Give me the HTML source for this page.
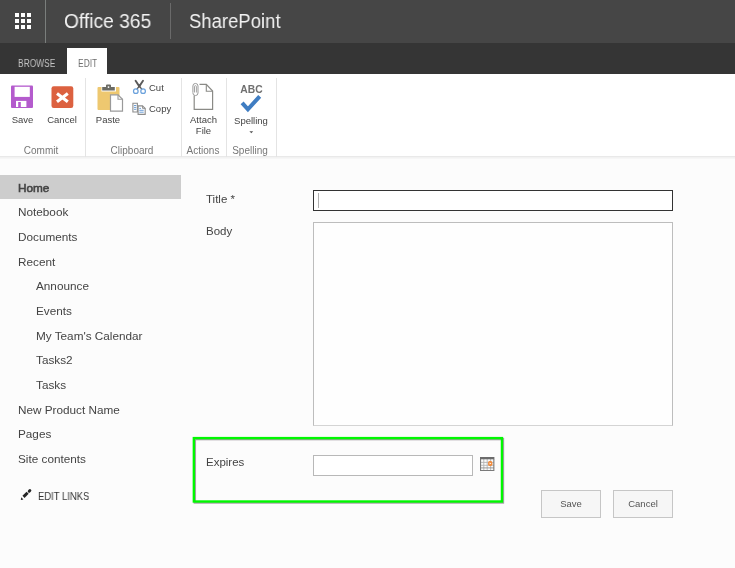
<!DOCTYPE html>
<html><head><meta charset="utf-8">
<style>
*{margin:0;padding:0;box-sizing:border-box}
html,body{width:735px;height:568px;overflow:hidden;-webkit-font-smoothing:antialiased;background:#fcfcfc;font-family:"Liberation Sans",sans-serif;color:#444}
.abs{position:absolute}
#top{position:absolute;left:0;top:0;width:735px;height:43px;background:#464646}
#tabs{position:absolute;left:0;top:43px;width:735px;height:31px;background:#353535}
#ribbon{position:absolute;left:0;top:74px;width:735px;height:83px;background:#ffffff;border-bottom:1px solid #e9e9e9}
#rshadow{position:absolute;left:0;top:157px;width:735px;height:2px;background:linear-gradient(#f0f0f0,#f8f8f8)}
.sq{position:absolute;width:4px;height:4px;background:#fff}
.vdiv{position:absolute;width:1px;background:#7a7a7a}
.ttl{position:absolute;top:9px;font-size:20px;color:#f2f2f2;line-height:24px;white-space:nowrap;transform-origin:0 0}
.tab{position:absolute;font-size:10px;line-height:12px;white-space:nowrap}
.rl{position:absolute;font-size:9.5px;color:#444;line-height:12px;white-space:nowrap;text-align:center}
.gl{position:absolute;font-size:10px;color:#777;line-height:12px;white-space:nowrap;text-align:center;width:100px}
.gsep{position:absolute;top:4px;width:1px;height:79px;background:#e4e4e4}
.nav{position:absolute;left:18px;font-size:11.75px;color:#444;line-height:16px;white-space:nowrap}
.nav.sub{left:36px}
.lbl{position:absolute;left:206px;font-size:11.5px;color:#444;line-height:16px;white-space:nowrap}
.btn{position:absolute;top:490px;height:28px;border:1px solid #c6c6c6;background:#f6f6f6;font-size:9.5px;color:#555;text-align:center;line-height:26px}
div,svg{will-change:transform}</style></head><body>
<div id="top">
  <div class="sq" style="left:15px;top:13px"></div><div class="sq" style="left:21px;top:13px"></div><div class="sq" style="left:27px;top:13px"></div>
  <div class="sq" style="left:15px;top:19px"></div><div class="sq" style="left:21px;top:19px"></div><div class="sq" style="left:27px;top:19px"></div>
  <div class="sq" style="left:15px;top:25px"></div><div class="sq" style="left:21px;top:25px"></div><div class="sq" style="left:27px;top:25px"></div>
  <div class="vdiv" style="left:45px;top:0;height:43px;background:#7a7e7c"></div>
  <div class="ttl" style="left:64px;transform:scaleX(0.96)">Office 365</div>
  <div class="vdiv" style="left:170px;top:3px;height:36px;background:#6a6a6a"></div>
  <div class="ttl" style="left:189px;transform:scaleX(0.925)">SharePoint</div>
</div>
<div id="tabs">
  <div class="tab" style="left:18px;top:15px;color:#c4c4c4;transform:scaleX(0.84);transform-origin:0 0">BROWSE</div>
  <div class="abs" style="left:67px;top:5px;width:40px;height:26px;background:#fff"></div>
  <div class="tab" style="left:78px;top:15px;color:#6e6e6e;transform:scaleX(0.84);transform-origin:0 0">EDIT</div>
</div>
<div id="rshadow"></div>
<div id="ribbon">
  <div class="gsep" style="left:85px"></div>
  <div class="gsep" style="left:181px"></div>
  <div class="gsep" style="left:226px"></div>
  <div class="gsep" style="left:276px"></div>
</div>
<svg class="abs" style="left:0;top:74px" width="300" height="84" viewBox="0 74 300 84">
  <!-- save -->
  <path d="M11 86.5 a1 1 0 0 1 1-1 H32 a1 1 0 0 1 1 1 V107 a1 1 0 0 1 -1 1 H12 a1 1 0 0 1 -1-1Z" fill="#b45bcd"/>
  <rect x="14.6" y="86.8" width="15.2" height="10.1" fill="#fff"/>
  <rect x="16" y="100.9" width="10.4" height="6.1" fill="#fff"/>
  <rect x="18.2" y="102" width="2.6" height="5" fill="#b45bcd"/>
  <!-- cancel -->
  <rect x="51.5" y="86.2" width="21.8" height="21.7" rx="2.2" fill="#dc6140"/>
  <path d="M57 93.6 L67.8 101.8 M67.8 93.6 L57 101.8" stroke="#fff" stroke-width="3.1" />
  <!-- paste -->
  <path d="M97.5 88 a1 1 0 0 1 1-1 H101.5 V91.4 H116 V87 H118.5 a1 1 0 0 1 1 1 V109 a1 1 0 0 1 -1 1 H98.5 a1 1 0 0 1 -1-1Z" fill="#eec870"/>
  <path d="M102.2 87 H106 V85.6 a1 1 0 0 1 1-1 H110 a1 1 0 0 1 1 1 V87 H114.8 V90.6 H102.2Z" fill="#6b6b64"/>
  <circle cx="108.5" cy="87.1" r="0.9" fill="#fff"/>
  <path d="M110.5 94.8 H118 L122.5 99.3 V111.2 H110.5Z" fill="#fff" stroke="#9a9a9a" stroke-width="1.2"/>
  <path d="M118 94.8 V99.3 H122.5" fill="none" stroke="#9a9a9a" stroke-width="1.1"/>
  <!-- cut -->
  <path d="M135.6 80.8 L139.5 86.6 M143 80.8 L139.1 86.6" stroke="#5a5a5a" stroke-width="1.9" stroke-linecap="round"/><path d="M139.3 86 L141.9 89.3 M139.3 86 L136.8 89.3" stroke="#5a5a5a" stroke-width="1.3"/>
  <circle cx="135.8" cy="91.2" r="2.3" fill="none" stroke="#6ca2dc" stroke-width="1.25"/>
  <circle cx="143.1" cy="91.2" r="2.3" fill="none" stroke="#6ca2dc" stroke-width="1.25"/>
  <!-- copy -->
  <path d="M132.9 103.2 H137.4 V112 H132.9Z" fill="#fff" stroke="#8c8c8c" stroke-width="1.1"/>
  <path d="M134 105.5 H136.3 M134 107.4 H136.3 M134 109.3 H136.3" stroke="#5b93d3" stroke-width="0.9"/>
  <path d="M138.1 105.9 H142.5 L145.2 108.4 V114.4 H138.1Z" fill="#fff" stroke="#8c8c8c" stroke-width="1.1"/>
  <path d="M142.5 105.9 V108.4 H145.2" fill="none" stroke="#8c8c8c" stroke-width="0.9"/>
  <path d="M139.3 108.4 H141 M139.3 110.3 H143.7 M139.3 112.2 H143.7" stroke="#5b93d3" stroke-width="0.9"/>
  <!-- attach -->
  <path d="M199.5 84.3 H206.3 L212.6 91 V109.4 H194.2 V95.5" fill="#fff" stroke="#8a8a86" stroke-width="1.2"/>
  <path d="M206.3 84.3 V91.3 H212.6" fill="none" stroke="#8a8a86" stroke-width="1.1"/>
  <path d="M192.9 92.8 V86 a2.55 2.55 0 0 1 5.1 0 V93 a2.55 2.55 0 0 1 -5.1 0" fill="none" stroke="#9a9a9a" stroke-width="1"/><path d="M194.5 92.5 V86.6 a0.95 0.95 0 0 1 1.9 0 V92.5" fill="none" stroke="#9a9a9a" stroke-width="0.9"/>
  <!-- spelling -->
  <text x="251.5" y="92.8" font-family="Liberation Sans" font-weight="bold" font-size="10.3" fill="#707070" text-anchor="middle">ABC</text>
  <path d="M242.1 102.8 L247.9 109.3 L259.7 96.3" fill="none" stroke="#3f7dc2" stroke-width="4" stroke-linecap="butt"/>
  <path d="M249.4 131.2 H253.2 L251.3 133.2Z" fill="#555"/>
</svg>
<div class="rl" style="left:11px;top:114px;width:23px">Save</div>
<div class="rl" style="left:46px;top:114px;width:32px">Cancel</div>
<div class="gl" style="left:-8.9px;top:145px">Commit</div>
<div class="rl" style="left:94px;top:114px;width:28px">Paste</div>
<div class="rl" style="left:149px;top:82px;text-align:left">Cut</div>
<div class="rl" style="left:149px;top:103px;text-align:left">Copy</div>
<div class="gl" style="left:81.5px;top:145px">Clipboard</div>
<div class="rl" style="left:186px;top:115px;width:35px;line-height:10.5px">Attach<br>File</div>
<div class="gl" style="left:152.5px;top:145px">Actions</div>
<div class="rl" style="left:232px;top:115px;width:38px">Spelling</div>
<div class="gl" style="left:199.9px;top:145px">Spelling</div>


<div class="abs" style="left:0;top:175px;width:181px;height:24px;background:#cdcdcd"></div>
<div class="nav" style="left:18px;top:180px;-webkit-text-stroke:0.6px #444">Home</div>
<div class="nav" style="left:18px;top:204px">Notebook</div>
<div class="nav" style="left:18px;top:229px">Documents</div>
<div class="nav" style="left:18px;top:254px">Recent</div>
<div class="nav" style="left:36px;top:278px">Announce</div>
<div class="nav" style="left:36px;top:303px">Events</div>
<div class="nav" style="left:36px;top:328px">My Team's Calendar</div>
<div class="nav" style="left:36px;top:352px">Tasks2</div>
<div class="nav" style="left:36px;top:377px">Tasks</div>
<div class="nav" style="left:18px;top:402px">New Product Name</div>
<div class="nav" style="left:18px;top:426px">Pages</div>
<div class="nav" style="left:18px;top:451px">Site contents</div>
<svg class="abs" style="left:19px;top:486px" width="14" height="16" viewBox="19 486 14 16">
  <path d="M23.5 496.9 L27.6 492.8" stroke="#262626" stroke-width="3" stroke-linecap="butt"/>
  <path d="M29.2 491.2 L29.9 490.5" stroke="#262626" stroke-width="2.9" stroke-linecap="round"/>
  <path d="M20.8 499.9 L21.3 497.3 L23.4 499.4Z" fill="#262626"/>
</svg>
<div class="nav" style="top:488px;left:38px;font-size:10.5px;color:#333;transform:scaleX(0.9);transform-origin:0 0">EDIT LINKS</div>

<div class="lbl" style="top:191px">Title *</div>
<div class="abs" style="left:313px;top:190px;width:360px;height:21px;border:1px solid #333;background:#fff"></div>
<div class="abs" style="left:318px;top:193px;width:1px;height:15px;background:#b0b0b0"></div>
<div class="lbl" style="top:223px">Body</div>
<div class="abs" style="left:313px;top:222px;width:360px;height:204px;border:1px solid #bdbdbd;border-bottom-color:#d4d4d4;background:#fefefe"></div>

<svg class="abs" style="left:180px;top:425px;filter:drop-shadow(1px 1px 0.7px rgba(60,40,60,0.45))" width="340" height="95" viewBox="180 425 340 95"><rect x="193.85" y="438.1" width="308.1" height="63.4" fill="none" stroke="#00f800" stroke-width="2.4"/></svg>
<div class="lbl" style="top:454px">Expires</div>
<div class="abs" style="left:313px;top:455px;width:160px;height:21px;border:1px solid #b8b8b8;background:#fff"></div>
<svg class="abs" style="left:480px;top:457px" width="15" height="15" viewBox="0 0 15 15">
  <rect x="0" y="0" width="14.4" height="14" fill="#fbfbfb"/>
  <path d="M3.8 2 V13.5 M7.2 2 V13.5 M10.6 2 V13.5 M0.5 5.4 H14 M0.5 8.3 H14" stroke="#b4b4b4" stroke-width="0.9" fill="none"/>
  <path d="M0.5 10.9 H14" stroke="#999" stroke-width="1" fill="none"/>
  <path d="M0.55 2 V13.45 H13.85 V2" stroke="#7a7a7a" stroke-width="1.1" fill="none"/>
  <rect x="0" y="0" width="14.4" height="2.3" fill="#6b6b6b"/>
  <rect x="8.1" y="4.1" width="4.3" height="4.8" rx="1.6" fill="#f08a3a"/>
  <path d="M9.6 5.4 L11.3 6.5 L9.6 7.6Z" fill="#fff"/>
</svg>

<div class="btn" style="left:541px;width:60px">Save</div>
<div class="btn" style="left:613px;width:60px">Cancel</div>
</body></html>
